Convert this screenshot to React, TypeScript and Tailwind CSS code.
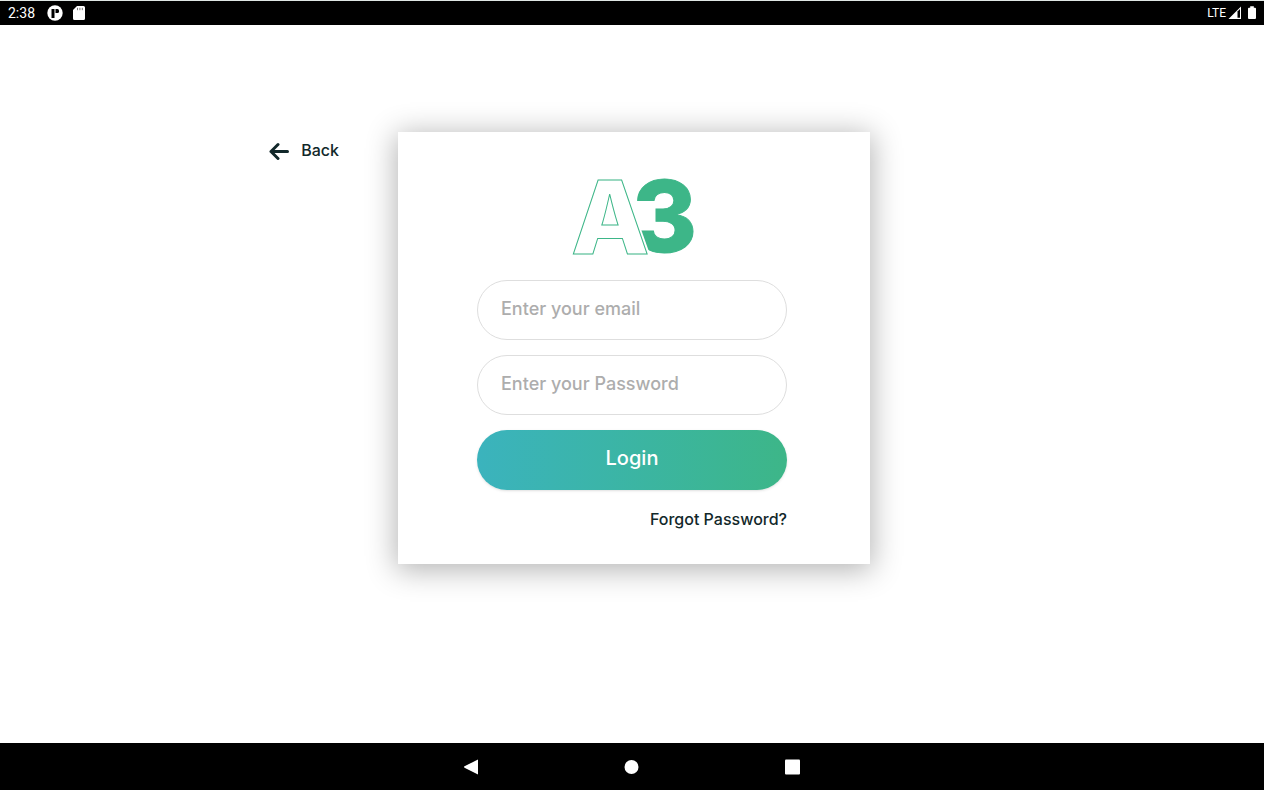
import type { InputHTMLAttributes } from "react";

function StatusBar() {
  return (
    <header className="flex h-[25px] items-center justify-between border-t border-[#dfe6e4] bg-black px-2 text-white">
      <div className="flex items-center gap-3">
        <span className="font-[Roboto,sans-serif] text-sm leading-5">2:38</span>
        <svg className="size-4" viewBox="0 0 16 16" aria-hidden="true">
          <circle cx="8" cy="8" r="7.7" fill="#fff" />
          <path d="M4.500 4h3v9H4.500z" fill="#000" />
          <path d="M8.500 4h2a1.500 1.500 0 0 1 1.500 1.500v1a1.500 1.500 0 0 1-1.500 1.500h-2z" fill="#000" />
        </svg>
        <svg className="-ml-1 size-4" viewBox="0 0 16 16" aria-hidden="true">
          <path d="M6 1h6.5A1.5 1.5 0 0 1 14 2.500v11A1.500 1.500 0 0 1 12.500 15h-9A1.500 1.500 0 0 1 2 13.500V5z" fill="#fff" />
          <path d="M6.500 2.800v2.400M8.900 2.800v2.400M11.300 2.800v2.400" stroke="#777" strokeWidth="1" />
        </svg>
      </div>
      <div className="flex items-center">
        <span className="font-[Roboto,sans-serif] text-xs leading-5">LTE</span>
        <svg className="ml-0.5 h-4 w-[14px]" viewBox="0 0 14 16" aria-hidden="true">
          <path d="M13 1.500V14H.5z" fill="#fff" />
          <path d="M9.500 6.500L12 4v8.800H9.500z" fill="#000" />
        </svg>
        <svg className="ml-1.5 h-4 w-2" viewBox="0 0 8 16" aria-hidden="true">
          <path d="M2.200 1.200h3.600v1.500H7a1 1 0 0 1 1 1V13a1 1 0 0 1-1 1H1a1 1 0 0 1-1-1V3.700a1 1 0 0 1 1-1h1.200z" fill="#fff" />
        </svg>
      </div>
    </header>
  );
}

function Logo() {
  return (
    <svg className="h-[84px] w-[128px] overflow-visible" viewBox="0 0 128 84" role="img" aria-label="A3">
      <g fontFamily="Inter, sans-serif" fontWeight="800">
        <text x="64" y="77" fontSize="99" fill="#3db688" stroke="#3db688" strokeWidth="1">3</text>
        <path d="M52 4L79 80" stroke="#fff" strokeWidth="6" />
        <text x="3" y="79" fontSize="102" fill="#fff" stroke="#3db688" strokeWidth="1">A</text>
      </g>
    </svg>
  );
}

function Field({ label, ...props }: { label: string } & InputHTMLAttributes<HTMLInputElement>) {
  return (
    <input
      {...props}
      aria-label={label}
      placeholder={label}
      className="h-[60px] w-full rounded-full border border-[#dedede] bg-white px-[23px] pb-1 text-lg font-medium text-[#12282a] outline-none placeholder:text-[#adadad]"
    />
  );
}

function NavigationBar() {
  return (
    <nav className="flex h-[47px] items-center justify-center gap-[145px] bg-black pt-px" aria-label="System">
      <button type="button" aria-label="Navigate back">
        <svg className="size-4" viewBox="0 0 16 16">
          <path d="M15 .5v15L1.500 8.700q-1-.7 0-1.400z" fill="#fff" />
        </svg>
      </button>
      <button type="button" aria-label="Home">
        <svg className="size-4" viewBox="0 0 16 16">
          <circle cx="7.500" cy="8" r="7" fill="#fff" />
        </svg>
      </button>
      <button type="button" aria-label="Recent apps">
        <svg className="size-4" viewBox="0 0 16 16">
          <rect x="0" y=".5" width="15" height="15" rx="1" fill="#fff" />
        </svg>
      </button>
    </nav>
  );
}

export default function App() {
  return (
    <div className="flex min-h-screen flex-col bg-white font-[Inter,sans-serif] text-[#12282a]">
      <StatusBar />
      <main className="grid flex-1 grid-cols-[1fr_472px_1fr] items-start pt-[107px] pl-1">
        <a href="#back" className="mt-1.5 mr-[59px] flex items-center gap-3 justify-self-end text-base font-medium">
          <svg className="size-5" viewBox="0 0 20 20" fill="none" stroke="currentColor" strokeWidth="3" strokeLinecap="round" strokeLinejoin="round" aria-hidden="true">
            <path d="M18.500 11.500H2M9 4.500L2 11.500l7 7" />
          </svg>
          Back
        </a>
        <form
          className="flex flex-col bg-white pt-[43px] pr-[83px] pb-[33px] pl-[79px] shadow-[0_4px_28px_2px_rgba(0,0,0,0.3)]"
          onSubmit={(event) => event.preventDefault()}
        >
          <div className="flex justify-center">
            <Logo />
          </div>
          <div className="mt-[21px] flex flex-col gap-[15px]">
            <Field label="Enter your email" type="email" />
            <Field label="Enter your Password" type="password" />
            <button
              type="submit"
              className="h-[60px] rounded-full bg-linear-to-r from-[#3bb3bd] to-[#3db688] pb-1 text-xl font-medium text-white shadow-sm"
            >
              Login
            </button>
          </div>
          <a href="#forgot" className="mt-[17px] self-end text-base font-medium">
            Forgot Password?
          </a>
        </form>
      </main>
      <NavigationBar />
    </div>
  );
}
